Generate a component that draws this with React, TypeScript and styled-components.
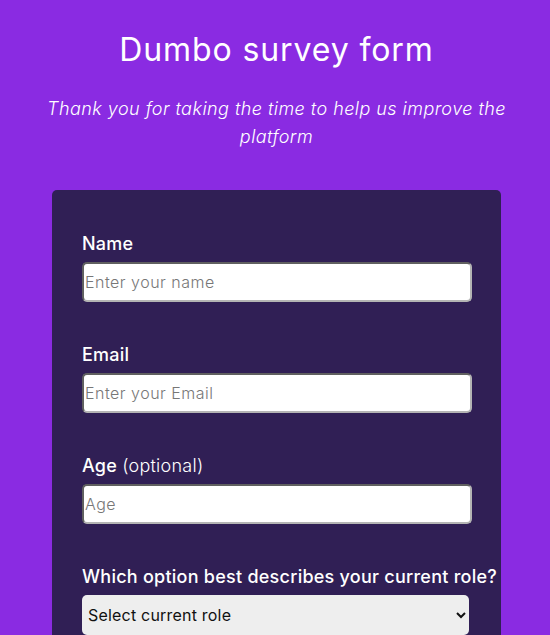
import React from 'react';
import styled, {createGlobalStyle} from 'styled-components';

const GlobalStyle = createGlobalStyle`
  body {
    margin: 0;
    background: #8a2be2;
    font-family: Inter, "Open Sans", "Liberation Sans", sans-serif;
    color: white;
  }
`;

const Page = styled.main`
  padding: 0 0 40px 3px;
`;

const Title = styled.h1`
  margin: 31px 0 0;
  font-size: 32px;
  line-height: 38px;
  font-weight: 400;
  letter-spacing: 0.9px;
  text-align: center;
`;

const Description = styled.p`
  margin: 26px auto 0;
  max-width: 480px;
  font-size: 18px;
  line-height: 28px;
  font-style: italic;
  font-weight: 300;
  letter-spacing: 0.45px;
  text-align: center;
`;

const Card = styled.form`
  box-sizing: border-box;
  width: 449px;
  margin: 39px auto 0;
  padding: 40px 29px 40px 30px;
  background: #301f55;
  border-radius: 5px;
  display: flex;
  flex-direction: column;
  gap: 39px;
`;

const Field = styled.div`
  display: flex;
  flex-direction: column;
  gap: 5px;
`;

const Label = styled.label`
  font-size: 18px;
  line-height: 27px;
  font-weight: 500;
  letter-spacing: 0.25px;
  white-space: nowrap;
  > span {
    font-weight: 300;
  }
`;

const TextInput = styled.input`
  box-sizing: border-box;
  width: 100%;
  height: 40px;
  padding: 0 1px;
  border: 2px inset #b4b4b4;
  border-radius: 5px;
  background: white;
  font-family: inherit;
  font-size: 16px;
  font-weight: 300;
  letter-spacing: 0.5px;
  color: #222;
  &::placeholder {
    color: #777;
  }
`;

const Select = styled.select`
  box-sizing: border-box;
  width: 387px;
  height: 40px;
  padding: 0 2px;
  border: none;
  border-radius: 5px;
  background: #eeeeee;
  font-family: inherit;
  font-size: 16px;
  letter-spacing: 0.2px;
  color: #111;
`;

export default function App() {
  return (
    <Page>
      <GlobalStyle/>
      <Title>Dumbo survey form</Title>
      <Description>Thank you for taking the time to help us improve the platform</Description>
      <Card>
        <Field>
          <Label htmlFor="name">Name</Label>
          <TextInput id="name" type="text" placeholder="Enter your name"/>
        </Field>
        <Field>
          <Label htmlFor="email">Email</Label>
          <TextInput id="email" type="email" placeholder="Enter your Email"/>
        </Field>
        <Field>
          <Label htmlFor="age">Age <span>(optional)</span></Label>
          <TextInput id="age" type="number" placeholder="Age"/>
        </Field>
        <Field>
          <Label htmlFor="role">Which option best describes your current role?</Label>
          <Select id="role" defaultValue="">
            <option value="" disabled>Select current role</option>
            <option value="student">Student</option>
            <option value="job">Full Time Job</option>
            <option value="learner">Full Time Learner</option>
            <option value="other">Other</option>
          </Select>
        </Field>
      </Card>
    </Page>
  );
}
